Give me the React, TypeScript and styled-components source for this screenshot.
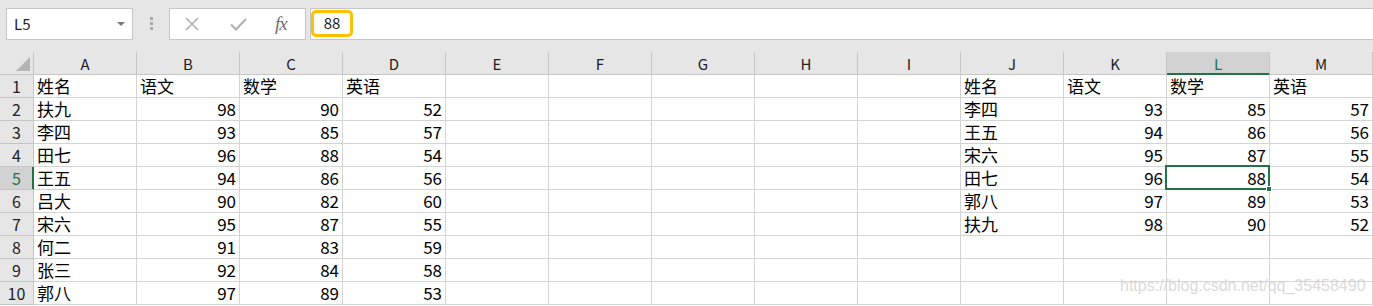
import React from "react";
import styled, { createGlobalStyle, css } from "styled-components";

const GlobalStyle = createGlobalStyle`
  html, body { margin: 0; padding: 0; background: #ffffff; }
  body { font-family: "Noto Sans CJK SC", "Noto Sans", sans-serif; overflow: hidden; }
  * { box-sizing: border-box; }
`;

const GREEN = "#217346";
const GRID = "#d4d4d4";
const HEAD_LINE = "#c6c6c6";

const Page = styled.div`
  position: relative;
  width: 1373px;
  height: 306px;
  overflow: hidden;
  background: #fff;
`;

const FormulaBar = styled.div`
  display: flex;
  align-items: flex-start;
  height: 52px;
  padding: 8px 0 0 6px;
  background: #e6e6e6;
`;

const Box = styled.div`
  height: 32px;
  border: 1px solid ${HEAD_LINE};
  background: #fff;
`;

const NameBox = styled(Box)`
  width: 127px;
  display: flex;
  align-items: center;
  padding: 0 7px 0 7px;
  font-size: 15px;
  line-height: 30px;
  color: #222;
`;

const NameText = styled.span`
  flex: 1;
`;

const DropArrow = styled.span`
  width: 0;
  height: 0;
  border-left: 4px solid transparent;
  border-right: 4px solid transparent;
  border-top: 4px solid #777;
`;

const Grip = styled.div`
  display: flex;
  flex-direction: column;
  gap: 2px;
  margin: 9px 0 0 17px;
`;

const GripDot = styled.span`
  width: 3px;
  height: 3px;
  background: #a8a8a8;
`;

const FxButtons = styled(Box)`
  width: 137px;
  margin-left: 16px;
  display: flex;
  align-items: center;
  padding-left: 15px;
  gap: 0;
`;

const IconSlot = styled.span<{ $w: number }>`
  display: flex;
  align-items: center;
  width: ${(p) => p.$w}px;
`;

const FxLabel = styled.span`
  font-family: "Liberation Serif", "DejaVu Serif", serif;
  font-style: italic;
  font-size: 19px;
  color: #6e6e6e;
  line-height: 30px;
  letter-spacing: -1px;
`;

const FormulaInput = styled(Box)`
  flex: 1;
  margin-left: 4px;
  border-right: none;
  padding: 1px 0 0 0;
`;

const Highlight = styled.div`
  width: 42px;
  height: 27px;
  border: 3px solid #ffc000;
  border-radius: 5px;
  font-size: 15px;
  line-height: 20px;
  text-align: center;
  color: #222;
`;

const Sheet = styled.div`
  display: grid;
  grid-template-columns: 34px repeat(13, 103px);
  grid-auto-rows: 23px;
`;

const HeaderCell = styled.div<{ $active?: boolean }>`
  background: ${(p) => (p.$active ? "#d2d2d2" : "#e6e6e6")};
  border-right: 1px solid ${HEAD_LINE};
  border-bottom: 1px solid ${HEAD_LINE};
  color: ${(p) => (p.$active ? GREEN : "#222")};
  font-size: 15px;
  line-height: 22px;
  padding-top: 1px;
  text-align: center;
  ${(p) =>
    p.$active &&
    css`
      border-bottom-color: ${GREEN};
      box-shadow: inset 0 -1px 0 ${GREEN};
    `}
`;

const Corner = styled.div`
  position: relative;
  background: #e6e6e6;
  border-right: 1px solid ${HEAD_LINE};
  border-bottom: 1px solid ${HEAD_LINE};
`;

const CornerMark = styled.svg`
  display: block;
`;

const RowHead = styled.div<{ $active?: boolean }>`
  background: ${(p) => (p.$active ? "#d2d2d2" : "#e6e6e6")};
  border-right: 1px solid ${(p) => (p.$active ? GREEN : HEAD_LINE)};
  border-bottom: 1px solid ${HEAD_LINE};
  color: ${(p) => (p.$active ? GREEN : "#222")};
  font-size: 16px;
  line-height: 22px;
  text-align: center;
  ${(p) =>
    p.$active &&
    css`
      box-shadow: inset -1px 0 0 ${GREEN};
    `}
`;

const Cell = styled.div<{ $num?: boolean }>`
  position: relative;
  border-right: 1px solid ${GRID};
  border-bottom: 1px solid ${GRID};
  font-size: 17px;
  line-height: 22px;
  color: #000;
  white-space: nowrap;
  padding: 0 ${(p) => (p.$num ? "3px" : "0")} 0 ${(p) => (p.$num ? "0" : "3px")};
  text-align: ${(p) => (p.$num ? "right" : "left")};
`;

const Selection = styled.div`
  position: absolute;
  top: -2px;
  left: -2px;
  right: -1px;
  bottom: -1px;
  border: 2px solid ${GREEN};
  z-index: 2;
  pointer-events: none;
`;

const FillHandle = styled.span`
  position: absolute;
  right: -4px;
  bottom: -4px;
  width: 6px;
  height: 6px;
  background: ${GREEN};
  border: 1px solid #fff;
`;

const Watermark = styled.div`
  position: absolute;
  left: 1120px;
  top: 276px;
  font-family: "Liberation Sans", Arial, sans-serif;
  font-size: 16px;
  line-height: 20px;
  color: rgba(205, 205, 205, 0.75);
  pointer-events: none;
  z-index: 3;
`;

const COLS = ["A", "B", "C", "D", "E", "F", "G", "H", "I", "J", "K", "L", "M"];

type Row = (string | number)[];

const left: Row[] = [
  ["姓名", "语文", "数学", "英语"],
  ["扶九", 98, 90, 52],
  ["李四", 93, 85, 57],
  ["田七", 96, 88, 54],
  ["王五", 94, 86, 56],
  ["吕大", 90, 82, 60],
  ["宋六", 95, 87, 55],
  ["何二", 91, 83, 59],
  ["张三", 92, 84, 58],
  ["郭八", 97, 89, 53],
];

const right: Row[] = [
  ["姓名", "语文", "数学", "英语"],
  ["李四", 93, 85, 57],
  ["王五", 94, 86, 56],
  ["宋六", 95, 87, 55],
  ["田七", 96, 88, 54],
  ["郭八", 97, 89, 53],
  ["扶九", 98, 90, 52],
];

const ACTIVE_COL = 11; // L
const ACTIVE_ROW = 4; // row 5 (0-based)

function cellValue(r: number, c: number): string | number | "" {
  if (c < 4) return left[r]?.[c] ?? "";
  if (c >= 9 && c < 13) return right[r]?.[c - 9] ?? "";
  return "";
}

export default function App() {
  return (
    <Page>
      <GlobalStyle />
      <FormulaBar>
        <NameBox>
          <NameText>L5</NameText>
          <DropArrow />
        </NameBox>
        <Grip>
          <GripDot />
          <GripDot />
          <GripDot />
        </Grip>
        <FxButtons>
          <IconSlot $w={45}>
            <svg width="14" height="14" viewBox="0 0 14 14">
              <path d="M1 1 L13 13 M13 1 L1 13" stroke="#b0b0b0" strokeWidth="1.6" fill="none" />
            </svg>
          </IconSlot>
          <IconSlot $w={45}>
            <svg width="17" height="13" viewBox="0 0 17 13">
              <path d="M1 6.5 L6 11.5 L16 1" stroke="#b0b0b0" strokeWidth="2" fill="none" />
            </svg>
          </IconSlot>
          <FxLabel>fx</FxLabel>
        </FxButtons>
        <FormulaInput>
          <Highlight>88</Highlight>
        </FormulaInput>
      </FormulaBar>
      <Sheet>
        <Corner>
          <CornerMark width="33" height="22" viewBox="0 0 33 22">
            <polygon points="30,5 30,19 16,19" fill="#b4b4b4" />
          </CornerMark>
        </Corner>
        {COLS.map((c, i) => (
          <HeaderCell key={c} $active={i === ACTIVE_COL}>
            {c}
          </HeaderCell>
        ))}
        {Array.from({ length: 10 }).map((_, r) => (
          <React.Fragment key={r}>
            <RowHead $active={r === ACTIVE_ROW}>{r + 1}</RowHead>
            {COLS.map((c, ci) => {
              const v = cellValue(r, ci);
              const isNum = typeof v === "number";
              const selected = r === ACTIVE_ROW && ci === ACTIVE_COL;
              return (
                <Cell key={c} $num={isNum}>
                  {v}
                  {selected && (
                    <Selection>
                      <FillHandle />
                    </Selection>
                  )}
                </Cell>
              );
            })}
          </React.Fragment>
        ))}
      </Sheet>
      <Watermark>https://blog.csdn.net/qq_35458490</Watermark>
    </Page>
  );
}
